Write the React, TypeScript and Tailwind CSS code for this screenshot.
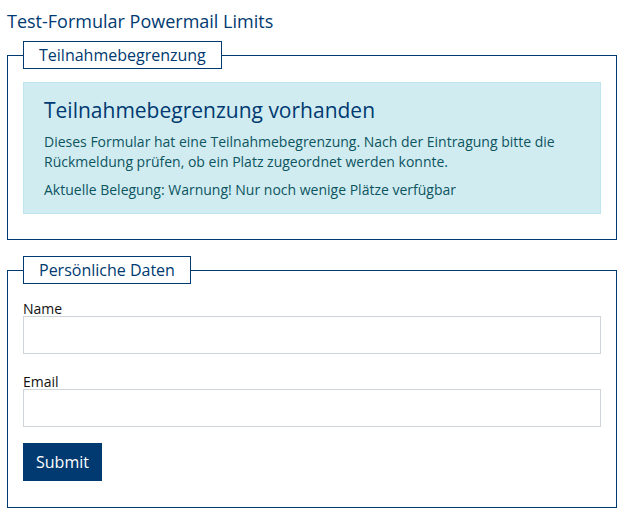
export default function App() {
  return (
    <div className="bg-white min-h-[519px] pl-[7px] pr-[9px] pt-[9px] pb-2" style={{ fontFamily: '"Open Sans", sans-serif' }}>
      <h1 className="text-[18px] leading-[24px] text-[#003a70] font-normal">Test-Formular Powermail Limits</h1>
      <fieldset className="mt-[8px] border border-[#003a70] px-[15px] pb-[25px] pt-[13px]">
        <legend className="border border-[#003a70] px-[15px] text-[16px] leading-[26px] text-[#003a70]">Teilnahmebegrenzung</legend>
        <div className="bg-[#d1ecf1] border border-[#bee5eb] px-[20px] pt-[12px] pb-[13px] text-[#0c5460]">
          <h2 className="text-[21px] leading-[30px] text-[#003a70] mb-[7px]">Teilnahmebegrenzung vorhanden</h2>
          <p className="text-[14px] leading-[20px] mb-[8px]">Dieses Formular hat eine Teilnahmebegrenzung. Nach der Eintragung bitte die Rückmeldung prüfen, ob ein Platz zugeordnet werden konnte.</p>
          <p className="text-[14px] leading-[20px]">Aktuelle Belegung: Warnung! Nur noch wenige Plätze verfügbar</p>
        </div>
      </fieldset>
      <fieldset className="mt-[16px] border border-[#003a70] px-[15px] pb-[26px] pt-[17px]">
        <legend className="border border-[#003a70] px-[15px] text-[16px] leading-[26px] text-[#003a70]">Persönliche Daten</legend>
        <label className="block text-[14px] leading-[15px] text-[#111]">Name</label>
        <input type="text" className="block w-full h-[38px] border border-[#ced4da] bg-white" />
        <label className="block mt-[20px] text-[14px] leading-[15px] text-[#111]">Email</label>
        <input type="text" className="block w-full h-[38px] border border-[#ced4da] bg-white" />
        <button className="mt-[16px] h-[38px] w-[79px] bg-[#003a70] text-white text-[16px]">Submit</button>
      </fieldset>
    </div>
  );
}
